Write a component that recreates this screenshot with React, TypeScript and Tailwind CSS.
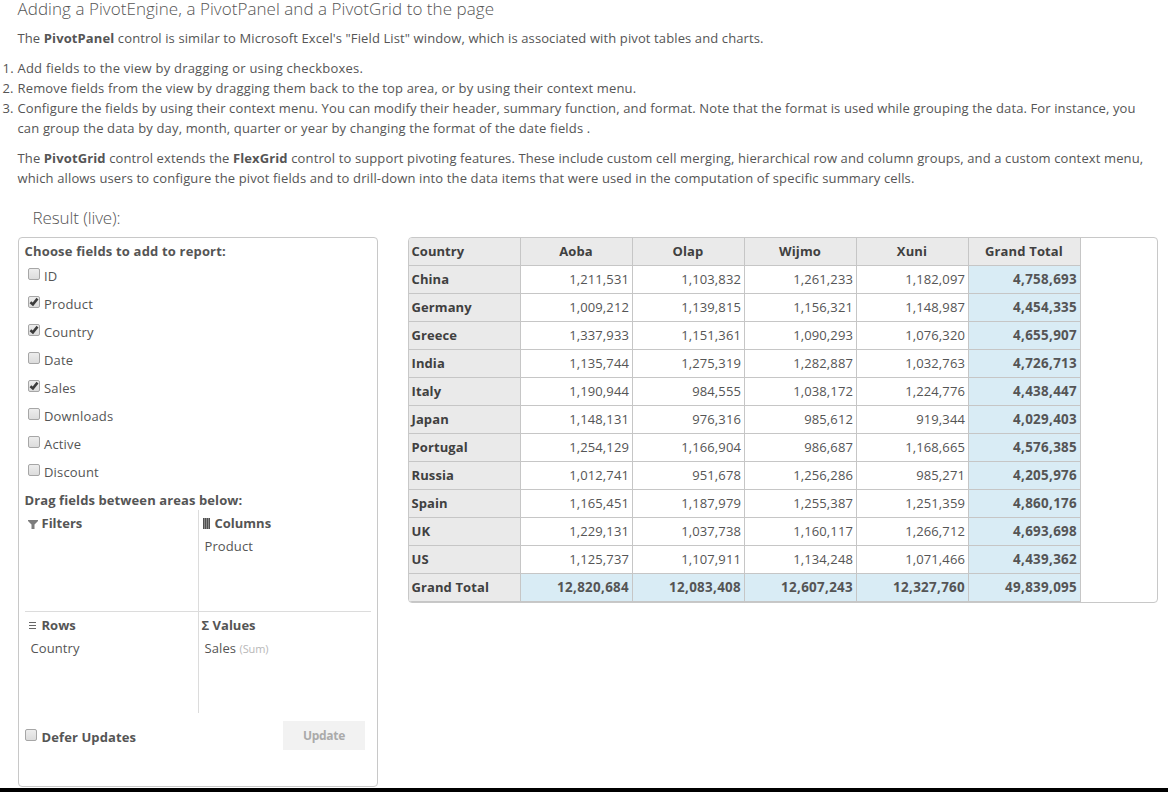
import type { ReactNode } from "react";

const fields = [
  { name: "ID", checked: false },
  { name: "Product", checked: true },
  { name: "Country", checked: true },
  { name: "Date", checked: false },
  { name: "Sales", checked: true },
  { name: "Downloads", checked: false },
  { name: "Active", checked: false },
  { name: "Discount", checked: false },
];

const headers = ["Aoba", "Olap", "Wijmo", "Xuni", "Grand Total"];

const rows: [string, string[]][] = [
  ["China", ["1,211,531", "1,103,832", "1,261,233", "1,182,097", "4,758,693"]],
  ["Germany", ["1,009,212", "1,139,815", "1,156,321", "1,148,987", "4,454,335"]],
  ["Greece", ["1,337,933", "1,151,361", "1,090,293", "1,076,320", "4,655,907"]],
  ["India", ["1,135,744", "1,275,319", "1,282,887", "1,032,763", "4,726,713"]],
  ["Italy", ["1,190,944", "984,555", "1,038,172", "1,224,776", "4,438,447"]],
  ["Japan", ["1,148,131", "976,316", "985,612", "919,344", "4,029,403"]],
  ["Portugal", ["1,254,129", "1,166,904", "986,687", "1,168,665", "4,576,385"]],
  ["Russia", ["1,012,741", "951,678", "1,256,286", "985,271", "4,205,976"]],
  ["Spain", ["1,165,451", "1,187,979", "1,255,387", "1,251,359", "4,860,176"]],
  ["UK", ["1,229,131", "1,037,738", "1,160,117", "1,266,712", "4,693,698"]],
  ["US", ["1,125,737", "1,107,911", "1,134,248", "1,071,466", "4,439,362"]],
  ["Grand Total", ["12,820,684", "12,083,408", "12,607,243", "12,327,760", "49,839,095"]],
];

function Checkbox({ checked = false }: { checked?: boolean }) {
  return (
    <span className="flex h-3 w-3 shrink-0 items-center justify-center rounded-[2px] border border-[#a6a6a6] bg-linear-to-b from-[#ededed] to-[#dcdcdc]">
      {checked && (
        <svg viewBox="0 0 10 10" className="h-2.5 w-2.5 shrink-0">
          <path d="M1.4 5.2 L3.9 7.4 L8.5 1.6" fill="none" stroke="#3c3c3c" strokeWidth="2.5" />
        </svg>
      )}
    </span>
  );
}

function FilterIcon() {
  return (
    <svg viewBox="0 0 10 9" className="h-[9px] w-2.5">
      <path d="M0 0 H10 V1 L6.5 4.6 V9 H3.5 V4.6 L0 1 Z" fill="#7d7d7d" />
    </svg>
  );
}

function ColumnsIcon() {
  return (
    <svg viewBox="0 0 8 11" className="h-[11px] w-2" shapeRendering="crispEdges">
      <rect width="7" height="11" fill="#8a8a8a" />
      <path d="M0 0h1v11h-1z M2 0h1v11h-1z M4 0h1v11h-1z M6 0h1v11h-1z" fill="#505050" />
    </svg>
  );
}

function RowsIcon() {
  return (
    <svg viewBox="0 0 7 7" className="h-[7px] w-[7px]" shapeRendering="crispEdges">
      <path d="M0 0h7v1h-7z M0 3h7v1h-7z M0 6h7v1h-7z" fill="#666" />
    </svg>
  );
}

function Area({ className, title, children }: { className: string; title: ReactNode; children?: ReactNode }) {
  return (
    <div className={className}>
      <div className="flex h-[23px] items-center font-bold">{title}</div>
      <div className="flex h-[23px] items-center tracking-[0.1px]">{children}</div>
    </div>
  );
}

function FieldPanel() {
  return (
    <section className="h-[550px] w-[360px] shrink-0 rounded border border-[#c8c8c8] pl-[5.5px]">
      <h3 className="h-[22px] pt-[3px] font-bold leading-5 tracking-[0.17px]">Choose fields to add to report:</h3>
      <ul className="mt-px">
        {fields.map((f) => (
          <li key={f.name} className="flex h-7 gap-1 pl-[3.5px] pt-[7px]">
            <Checkbox checked={f.checked} />
            <span className="-mt-[2px] leading-5 tracking-[0.17px]">{f.name}</span>
          </li>
        ))}
      </ul>
      <h3 className="h-[25px] pt-[5px] font-bold leading-5 tracking-[0.1px]">Drag fields between areas below:</h3>
      <div className="grid w-[346px] grid-cols-[174px_172px] grid-rows-[102px_101px]">
        <Area
          className="border-r border-b border-[#dcdcdc] pt-px pl-[3.5px]"
          title={
            <>
              <span className="mt-[3px] w-[13.5px]"><FilterIcon /></span>Filters
            </>
          }
        />
        <Area
          className="border-b border-[#dcdcdc] pt-px pl-1"
          title={
            <>
              <span className="mt-px w-3"><ColumnsIcon /></span>Columns
            </>
          }
        >
          <span className="pl-[2px]">Product</span>
        </Area>
        <Area
          className="border-r border-[#dcdcdc] pt-px pl-[4.5px]"
          title={
            <>
              <span className="mt-[2px] w-[12.5px]"><RowsIcon /></span>Rows
            </>
          }
        >
          <span className="pl-[1.5px]">Country</span>
        </Area>
        <Area className="pt-px pl-[3px]" title={<span>Σ Values</span>}>
          <span className="pt-px pl-[3px]">
            Sales <span className="text-[11px] tracking-[-0.15px] text-[#b8b8b8]">(Sum)</span>
          </span>
        </Area>
      </div>
      <div className="mt-2 flex w-[340px] items-start justify-between">
        <label className="flex gap-[5px] pt-2 font-bold">
          <Checkbox />
          <span className="-mt-[2px] leading-5 tracking-[0.1px]">Defer Updates</span>
        </label>
        <button className="h-[29px] w-[82px] bg-[#f2f2f2] pl-px text-xs font-bold tracking-[-0.3px] text-[#aaa]">Update</button>
      </div>
    </section>
  );
}

function PivotGrid() {
  return (
    <section className="h-[366px] w-[750px] overflow-hidden rounded border border-[#c8c8c8]">
      <div className="flex h-7 w-[672px] font-bold text-[#404040]">
        <div className="w-28 border-r border-b border-[#c6c6c6] bg-[#eaeaea] pl-[2.5px] leading-[27px] tracking-[0.05px]">Country</div>
        {headers.map((h) => (
          <div key={h} className="w-28 border-r border-b border-[#c6c6c6] bg-[#eaeaea] pr-px text-center leading-[27px] tracking-[0.15px]">
            {h}
          </div>
        ))}
      </div>
      {rows.map(([name, values], r) => (
        <div key={name} className="flex h-7 w-[672px]">
          <div className="w-28 border-r border-b border-[#c6c6c6] bg-[#eaeaea] pl-[2.5px] font-bold leading-[27px] tracking-[0.1px] text-[#404040]">
            {name}
          </div>
          {values.map((v, c) => (
            <div
              key={c}
              className={
                r === rows.length - 1 || c === 4
                  ? "w-28 border-r border-b border-[#c6c6c6] bg-[#d9ecf5] pr-[3px] text-right text-[13.4px] font-bold leading-[27px] tracking-[0.3px]"
                  : "w-28 border-r border-b border-[#c6c6c6] pr-[3px] text-right leading-[27px] tracking-[0.12px]"
              }
            >
              {v}
            </div>
          ))}
        </div>
      ))}
    </section>
  );
}

export default function App() {
  return (
    <div className="flex h-[792px] w-[1168px] flex-col overflow-hidden border-b-4 border-black bg-white font-['Open_Sans','Noto_Sans',sans-serif] text-[13px] leading-5 text-[#555] whitespace-nowrap">
      <header className="pl-[17.5px]">
        <h1 className="h-7 text-[17px] font-light leading-[18px] tracking-[0.05px]">Adding a PivotEngine, a PivotPanel and a PivotGrid to the page</h1>
        <p className="tracking-[0.115px]">
          The <b>PivotPanel</b> control is similar to Microsoft Excel's "Field List" window, which is associated with pivot tables and charts.
        </p>
        <ol className="my-2.5 -ml-[15px]">
          <li className="flex tracking-[0.22px]"><span className="w-[15px]">1.</span>Add fields to the view by dragging or using checkboxes.</li>
          <li className="flex tracking-[0.17px]"><span className="w-[15px]">2.</span>Remove fields from the view by dragging them back to the top area, or by using their context menu.</li>
          <li className="flex">
            <span className="w-[15px]">3.</span>
            <span>
              <span className="tracking-[0.12px]">Configure the fields by using their context menu. You can modify their header, summary function, and format. Note that the format is used while grouping the data. For instance, you</span>
              <br />
              <span className="tracking-[0.145px]">can group the data by day, month, quarter or year by changing the format of the date fields .</span>
            </span>
          </li>
        </ol>
        <p>
          <span className="tracking-[0.124px]">
            The <b>PivotGrid</b> control extends the <b>FlexGrid</b> control to support pivoting features. These include custom cell merging, hierarchical row and column groups, and a custom context menu,
          </span>
          <br />
          <span className="tracking-[0.135px]">which allows users to configure the pivot fields and to drill-down into the data items that were used in the computation of specific summary cells.</span>
        </p>
      </header>
      <main className="pl-[18px]">
        <h2 className="h-[49px] pt-5 pl-[14.5px] text-[17px] font-light leading-5 tracking-[-0.1px]">Result (live):</h2>
        <div className="flex items-start gap-[30px]">
          <FieldPanel />
          <PivotGrid />
        </div>
      </main>
    </div>
  );
}
